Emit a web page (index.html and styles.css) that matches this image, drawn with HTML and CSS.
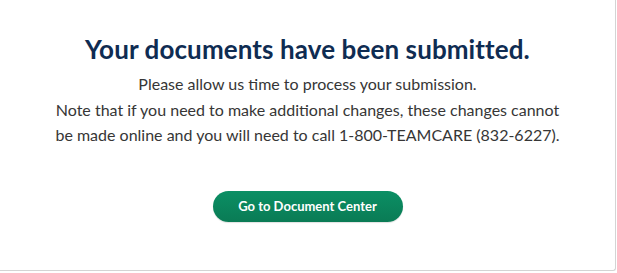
FILE: index.html
```html
<!DOCTYPE html>
<html lang="en">
<head>
<meta charset="utf-8">
<title>Documents submitted</title>
<link rel="stylesheet" href="styles.css">
</head>
<body>
<div class="card">
  <h1 class="title">Your documents have been submitted.</h1>
  <p class="message">Please allow us time to process your submission.<br>Note that if you need to make additional changes, these changes cannot<br>be made online and you will need to call 1-800-TEAMCARE (832-6227).</p>
  <div class="actions">
    <a class="btn" href="#">Go to Document Center</a>
  </div>
</div>
</body>
</html>
```
FILE: styles.css
```css
html, body {
  margin: 0;
  padding: 0;
  background: #ffffff;
}
body {
  font-family: Lato, "Open Sans", "Liberation Sans", sans-serif;
}
.card {
  box-sizing: border-box;
  width: 616px;
  height: 271px;
  background: #ffffff;
  border-right: 1px solid #d4d4d4;
  border-bottom: 1px solid #d4d4d4;
  border-bottom-right-radius: 3px;
  padding-top: 33px;
  display: flex;
  flex-direction: column;
  align-items: center;
}
.title {
  margin: 0;
  font-size: 26px;
  line-height: 32px;
  font-weight: 700;
  color: #0f2c52;
  letter-spacing: 0.1px;
}
.message {
  margin: 6px 0 0;
  font-size: 16px;
  line-height: 25.5px;
  color: #363636;
  text-align: center;
}
.actions {
  margin-top: 43px;
}
.btn {
  display: flex;
  align-items: center;
  justify-content: center;
  width: 190px;
  height: 31px;
  border-radius: 16px;
  background: linear-gradient(#0b8f64, #0a7b55);
  color: #ffffff;
  font-size: 13px;
  font-weight: 700;
  text-decoration: none;
  box-shadow: 0 1px 1px rgba(0,0,0,0.12);
}
```
